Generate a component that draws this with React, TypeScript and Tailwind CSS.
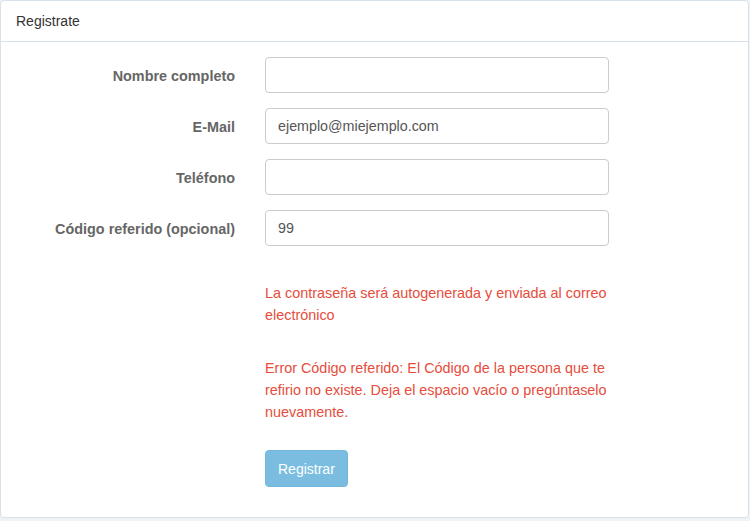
import React from "react";

const font = { fontFamily: '"Liberation Sans", Arial, Helvetica, sans-serif' };

function Row({ label, value, top }: { label: string; value?: string; top?: boolean }) {
  return (
    <div className={`flex items-center ${top ? "" : "mt-[15px]"}`}>
      <label className="w-[234px] pt-[2px] text-right text-[14.4px] font-bold leading-5 text-[#666666]">
        {label}
      </label>
      <div className="ml-[30px] w-[344px]">
        <input
          readOnly
          defaultValue={value ?? ""}
          className="block h-[36px] w-full rounded-[4px] border border-[#cccccc] bg-white px-[12px] text-[14.3px] text-[#555555] outline-none"
          style={font}
        />
      </div>
    </div>
  );
}

export default function App() {
  return (
    <div className="h-[521px] w-[750px] overflow-hidden bg-[#f0f3f6]" style={font}>
      <div className="w-[749px] rounded-[4px] border border-[#d8e1ea] bg-white">
        <div className="border-b border-[#d8e1ea] px-[15px] pb-[10px] pt-[10px] text-[14px] leading-5 text-[#333333]">
          Registrate
        </div>
        <div className="pb-[30px] pt-[15px]">
          <Row label="Nombre completo" top />
          <Row label="E-Mail" value="ejemplo@miejemplo.com" />
          <Row label="Teléfono" />
          <Row label="Código referido (opcional)" value="99" />
          <div className="ml-[264px] w-[350px] text-[14.4px] leading-[22px] text-[#e74c3c]">
            <p className="mt-[36px]">La contraseña será autogenerada y enviada al correo electrónico</p>
            <p className="mt-[31px]">
              Error Código referido: El Código de la persona que te refirio no existe. Deja el espacio vacío o pregúntaselo nuevamente.
            </p>
            <button
              disabled
              className="mt-[27px] h-[37px] rounded-[4px] border border-[#72b6dd] bg-[#7abde0] px-[12px] text-[14px] text-white"
              style={font}
            >
              Registrar
            </button>
          </div>
        </div>
      </div>
    </div>
  );
}
